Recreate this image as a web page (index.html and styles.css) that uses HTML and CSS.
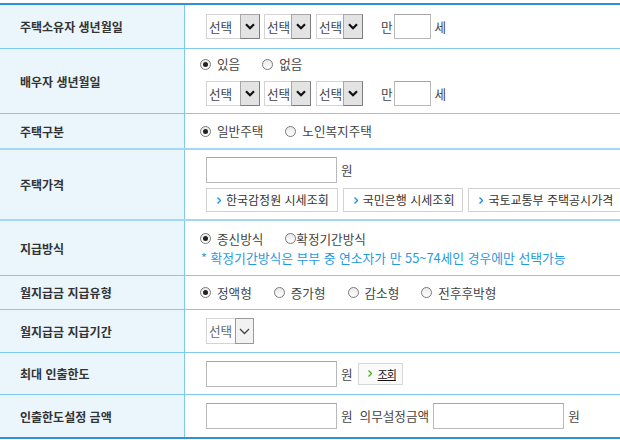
FILE: index.html
```html
<!DOCTYPE html>
<html lang="ko">
<head>
<meta charset="UTF-8">
<title>주택연금 예상연금 조회</title>
<link rel="stylesheet" href="styles.css">
</head>
<body>
  <div class="form-table">

    <div class="row r1">
      <div class="th">주택소유자 생년월일</div>
      <div class="td">
        <div class="line ctrl">
          <span class="sel sel-wide"><span class="sel-val">선택</span><span class="sel-btn"><svg width="10" height="7" viewBox="0 0 10 7"><path d="M1 1.2l4 4 4-4" fill="none" stroke="#111" stroke-width="2.2"/></svg></span></span>
          <span class="sel"><span class="sel-val">선택</span><span class="sel-btn"><svg width="10" height="7" viewBox="0 0 10 7"><path d="M1 1.2l4 4 4-4" fill="none" stroke="#111" stroke-width="2.2"/></svg></span></span>
          <span class="sel"><span class="sel-val">선택</span><span class="sel-btn"><svg width="10" height="7" viewBox="0 0 10 7"><path d="M1 1.2l4 4 4-4" fill="none" stroke="#111" stroke-width="2.2"/></svg></span></span>
          <span class="unit man">만</span>
          <span class="input age"></span>
          <span class="unit">세</span>
        </div>
      </div>
    </div>

    <div class="row r2">
      <div class="th">배우자 생년월일</div>
      <div class="td gap9">
        <div class="line">
          <span class="radio on"></span><span class="rlabel">있음</span>
          <span class="radio"></span><span class="rlabel">없음</span>
        </div>
        <div class="line ctrl">
          <span class="sel sel-wide"><span class="sel-val">선택</span><span class="sel-btn"><svg width="10" height="7" viewBox="0 0 10 7"><path d="M1 1.2l4 4 4-4" fill="none" stroke="#111" stroke-width="2.2"/></svg></span></span>
          <span class="sel"><span class="sel-val">선택</span><span class="sel-btn"><svg width="10" height="7" viewBox="0 0 10 7"><path d="M1 1.2l4 4 4-4" fill="none" stroke="#111" stroke-width="2.2"/></svg></span></span>
          <span class="sel"><span class="sel-val">선택</span><span class="sel-btn"><svg width="10" height="7" viewBox="0 0 10 7"><path d="M1 1.2l4 4 4-4" fill="none" stroke="#111" stroke-width="2.2"/></svg></span></span>
          <span class="unit man">만</span>
          <span class="input age"></span>
          <span class="unit">세</span>
        </div>
      </div>
    </div>

    <div class="row r3 double">
      <div class="th">주택구분</div>
      <div class="td">
        <div class="line">
          <span class="radio on"></span><span class="rlabel">일반주택</span>
          <span class="radio"></span><span class="rlabel">노인복지주택</span>
        </div>
      </div>
    </div>

    <div class="row r4 double">
      <div class="th">주택가격</div>
      <div class="td gap5">
        <div class="line ctrl">
          <span class="input price"></span>
          <span class="unit">원</span>
        </div>
        <div class="line ctrl links">
          <span class="link-btn"><svg width="4" height="7" viewBox="0 0 4 7"><path d="M0.5 0.5l3 3-3 3" fill="none" stroke="#1d8fe0" stroke-width="1.3"/></svg>한국감정원 시세조회</span>
          <span class="link-btn"><svg width="4" height="7" viewBox="0 0 4 7"><path d="M0.5 0.5l3 3-3 3" fill="none" stroke="#1d8fe0" stroke-width="1.3"/></svg>국민은행 시세조회</span>
          <span class="link-btn"><svg width="4" height="7" viewBox="0 0 4 7"><path d="M0.5 0.5l3 3-3 3" fill="none" stroke="#1d8fe0" stroke-width="1.3"/></svg>국토교통부 주택공시가격</span>
        </div>
      </div>
    </div>

    <div class="row r5">
      <div class="th">지급방식</div>
      <div class="td gap4">
        <div class="line">
          <span class="radio on"></span><span class="rlabel">종신방식</span>
          <span class="radio tight"></span><span class="rlabel">확정기간방식</span>
        </div>
        <div class="note">* 확정기간방식은 부부 중 연소자가 만 55~74세인 경우에만 선택가능</div>
      </div>
    </div>

    <div class="row r6">
      <div class="th">월지급금 지급유형</div>
      <div class="td">
        <div class="line">
          <span class="radio on"></span><span class="rlabel">정액형</span>
          <span class="radio"></span><span class="rlabel">증가형</span>
          <span class="radio"></span><span class="rlabel">감소형</span>
          <span class="radio"></span><span class="rlabel">전후후박형</span>
        </div>
      </div>
    </div>

    <div class="row r7">
      <div class="th">월지급금 지급기간</div>
      <div class="td">
        <div class="line ctrl">
          <span class="sel sel-light"><span class="sel-val">선택</span><span class="sel-btn"><svg width="11" height="7" viewBox="0 0 11 7"><path d="M1 1l4.5 4.5L10 1" fill="none" stroke="#444" stroke-width="1.3"/></svg></span></span>
        </div>
      </div>
    </div>

    <div class="row r8">
      <div class="th">최대 인출한도</div>
      <div class="td">
        <div class="line ctrl">
          <span class="input price"></span>
          <span class="unit">원</span>
          <span class="search-btn"><svg width="4" height="7" viewBox="0 0 4 7"><path d="M0.5 0.5l3 3-3 3" fill="none" stroke="#4caf1c" stroke-width="1.3"/></svg><u>조회</u></span>
        </div>
      </div>
    </div>

    <div class="row r9">
      <div class="th">인출한도설정 금액</div>
      <div class="td">
        <div class="line ctrl">
          <span class="input price"></span>
          <span class="unit">원</span>
          <span class="unit duty">의무설정금액</span>
          <span class="input price"></span>
          <span class="unit">원</span>
        </div>
      </div>
    </div>

  </div>
</body>
</html>
```

FILE: styles.css
```css
body {
  margin: 0;
  font-family: "Noto Sans CJK KR", "Noto Sans", sans-serif;
  font-size: 12.6px;
  color: #444;
  background-color: #fff;
}

.form-table {
  margin-top: 3px;
  width: 620px;
  border-top: 2px solid #2d92d6;
  border-bottom: 2px solid #2d92d6;
}

.row {
  display: flex;
  box-sizing: border-box;
  border-bottom: 1px solid #7fcaf0;
}

.row:last-child {
  border-bottom: 0;
}

.row.double {
  border-bottom: 2px solid #a3d7f4;
}

.r1 { height: 44px; }
.r2 { height: 65px; }
.r3 { height: 36px; }
.r4 { height: 71px; }
.r5 { height: 55px; }
.r6 { height: 34px; }
.r7 { height: 43px; }
.r8 { height: 42px; }
.r9 { height: 42px; }

.th {
  width: 185px;
  flex: none;
  box-sizing: border-box;
  padding-left: 20px;
  display: flex;
  align-items: center;
  background-color: #eaf5fc;
  border-right: 1px solid #7fcaf0;
  font-weight: bold;
  font-size: 12px;
  color: #333;
}

.td {
  flex: 1;
  padding-left: 15px;
  display: flex;
  flex-direction: column;
  justify-content: center;
}

.gap9 { gap: 9px; }
.gap5 { gap: 5px; }
.gap4 { gap: 3px; }

.line {
  display: flex;
  align-items: center;
  line-height: 16px;
  white-space: nowrap;
}

.line > * {
  flex: none;
}

.line.ctrl {
  padding-left: 6px;
}

/* radio buttons */
.radio {
  width: 11px;
  height: 11px;
  box-sizing: border-box;
  border: 1px solid #7a7a7a;
  border-radius: 50%;
  background: linear-gradient(#e9e9e9, #fff);
  display: inline-flex;
  align-items: center;
  justify-content: center;
  margin-right: 6px;
}

.radio.on::after {
  content: "";
  width: 5px;
  height: 5px;
  border-radius: 50%;
  background-color: #222;
}

.radio.tight {
  margin-right: 0;
}

.rlabel {
  margin-right: 22px;
  color: #444;
}

/* select boxes */
.sel {
  display: inline-flex;
  height: 25px;
  width: 47px;
  box-sizing: border-box;
  border: 1px solid #d4d4d4;
  margin-right: 5px;
  background-color: #fff;
}

.sel-wide {
  width: 54px;
  margin-right: 4px;
}

.sel-val {
  flex: 1;
  padding-left: 2px;
  line-height: 23px;
  color: #444;
  white-space: nowrap;
}

.sel-btn {
  width: 20px;
  flex: none;
  box-sizing: border-box;
  display: flex;
  align-items: center;
  justify-content: center;
  background-color: #e3e3e3;
  border: 1px solid #7d7d7d;
  border-top-color: #a8a8a8;
  border-left-color: #a8a8a8;
  margin: -1px -1px -1px 0;
}

.sel-light {
  width: 48px;
  height: 26px;
}

.sel-light .sel-val {
  line-height: 24px;
  color: #666;
}

.sel-light .sel-btn {
  width: 19px;
  background-color: #f2f2f2;
  border-color: #9a9a9a;
}

/* text inputs */
.input {
  display: inline-block;
  height: 26px;
  box-sizing: border-box;
  border: 1px solid #b9b9b9;
  border-top-color: #a5a5a5;
  background-color: #fff;
}

.input.age {
  width: 37px;
  height: 25px;
}

.input.price {
  width: 131px;
}

.unit {
  margin-left: 4px;
  color: #444;
}

.unit.man {
  margin-left: 13px;
  margin-right: 1px;
}

.unit.duty {
  margin-left: 7px;
  margin-right: 4px;
}

/* link buttons */
.links {
  padding-left: 9px;
}

.link-btn {
  display: inline-flex;
  align-items: center;
  height: 24px;
  box-sizing: border-box;
  padding: 0 8px 0 10px;
  margin-right: 5px;
  border: 1px solid #d2d2d2;
  background-color: #fff;
  font-size: 12px;
  color: #333;
}

.link-btn svg {
  margin-right: 5px;
}

.search-btn {
  display: inline-flex;
  align-items: center;
  height: 22px;
  box-sizing: border-box;
  padding: 0 6px 0 9px;
  margin-left: 5px;
  border: 1px solid #d6d6d6;
  background-color: #fafafa;
  font-size: 11px;
  letter-spacing: -1px;
  color: #111;
}

.search-btn svg {
  margin-right: 6px;
}

.note {
  font-size: 12.8px;
  line-height: 16px;
  color: #1f9ae0;
  padding-left: 1px;
  white-space: nowrap;
}
```
